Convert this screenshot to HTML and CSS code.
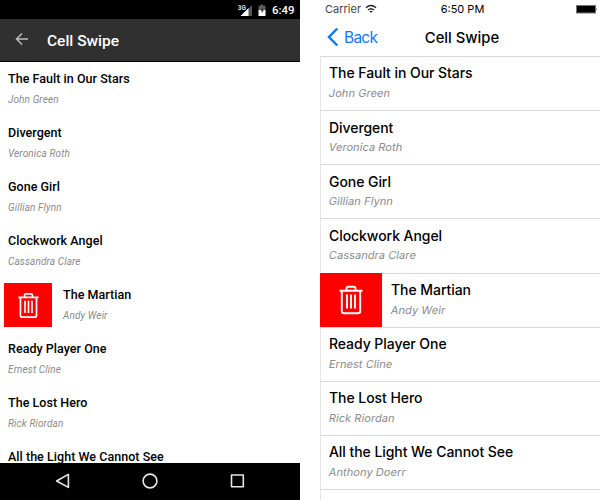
FILE: index.html
```
<!DOCTYPE html>
<html lang="en">
<head>
<meta charset="utf-8">
<title>Cell Swipe</title>
<link rel="stylesheet" href="styles.css">
</head>
<body>
<svg class="defs" width="0" height="0">
  <symbol id="trash" viewBox="0 0 24 30">
    <path d="M.5 5.8H23.5M7.5 5.5V3.4Q7.5 1.7 9.2 1.7H14.8Q16.5 1.7 16.5 3.4V5.5M2.8 6V26Q2.8 28.3 5 28.3H19Q21.2 28.3 21.2 26V6M8 9.5V23.5M12 9.5V23.5M16 9.5V23.5" fill="none" stroke="#fff" stroke-width="1.9"/>
  </symbol>
</svg>
<main class="screens">
  <section class="phone android">
    <div class="status">
      <svg class="status-icons" width="30" height="18" viewBox="0 0 30 18">
        <text x="-.3" y="8.6" class="net">3G</text>
        <path d="M14 4V15H10V8Z" fill="#555"/>
        <path d="M2.5 15L10.5 7V15Z" fill="#fff"/>
        <path d="M20.5 4.7H22.5V3.5H25V4.7H27.5V9H20.5Z" fill="#5d5d5d"/>
        <path d="M20.5 9H27.5V15H20.5Z" fill="#fff"/>
        <path d="M25 6.5L22.8 9.8H24L23.6 12.3L25.7 9.2H24.5Z" fill="#111"/>
      </svg>
      <span class="clock">6:49</span>
    </div>
    <header class="bar">
      <svg class="arrow" width="14" height="14" viewBox="0 0 14 14"><path d="M13 7H1.7M7 1.5L1.5 7L7 12.5" fill="none" stroke="#bdbdbd" stroke-width="1.5"/></svg>
      <h1>Cell Swipe</h1>
    </header>
    <ul class="list">
      <li><div class="book"><b>The Fault in Our Stars</b><i>John Green</i></div></li>
      <li><div class="book"><b>Divergent</b><i>Veronica Roth</i></div></li>
      <li><div class="book"><b>Gone Girl</b><i>Gillian Flynn</i></div></li>
      <li><div class="book"><b>Clockwork Angel</b><i>Cassandra Clare</i></div></li>
      <li><div class="delete"><svg width="21" height="27"><use href="#trash"/></svg></div><div class="book"><b>The Martian</b><i>Andy Weir</i></div></li>
      <li><div class="book"><b>Ready Player One</b><i>Ernest Cline</i></div></li>
      <li><div class="book"><b>The Lost Hero</b><i>Rick Riordan</i></div></li>
      <li><div class="book"><b>All the Light We Cannot See</b></div></li>
    </ul>
    <nav class="keys">
      <svg width="16" height="16" viewBox="0 0 16 16"><path d="M14.4 1.4V14.4L2.6 8Z"/></svg>
      <svg width="16" height="16" viewBox="0 0 16 16"><circle cx="8" cy="8" r="6.9"/></svg>
      <svg width="16" height="16" viewBox="0 0 16 16"><rect x="1.5" y="2" width="11.8" height="11.8"/></svg>
    </nav>
  </section>
  <section class="phone ios">
    <div class="status">
      <span class="carrier">Carrier
        <svg width="12" height="10" viewBox="0 0 12 10"><path d="M1 3.8Q6-.6 11 3.8M3 6Q6 3.4 9 6" fill="none" stroke="#222" stroke-width="1.4"/><path d="M4.4 7.3Q6 6.1 7.6 7.3L6 9Z" fill="#222"/></svg>
      </span>
      <span class="clock">6:50 PM</span>
      <svg class="battery" width="22" height="9" viewBox="0 0 22 9"><rect x=".5" y=".5" width="19" height="7.5" fill="#000" stroke="#777"/><path d="M20.5 3Q22 4.2 20.5 5.5Z" fill="#222"/></svg>
    </div>
    <header class="bar">
      <a class="back"><svg width="12" height="20" viewBox="0 0 12 20"><path d="M10.3 1.5L2 10L10.3 18.5" fill="none" stroke="#1478fb" stroke-width="2.5"/></svg><span>Back</span></a>
      <h1>Cell Swipe</h1>
    </header>
    <ul class="list">
      <li><div class="book"><b>The Fault in Our Stars</b><i>John Green</i></div></li>
      <li><div class="book"><b>Divergent</b><i>Veronica Roth</i></div></li>
      <li><div class="book"><b>Gone Girl</b><i>Gillian Flynn</i></div></li>
      <li><div class="book"><b>Clockwork Angel</b><i>Cassandra Clare</i></div></li>
      <li><div class="delete"><svg width="24" height="30"><use href="#trash"/></svg></div><div class="book"><b>The Martian</b><i>Andy Weir</i></div></li>
      <li><div class="book"><b>Ready Player One</b><i>Ernest Cline</i></div></li>
      <li><div class="book"><b>The Lost Hero</b><i>Rick Riordan</i></div></li>
      <li><div class="book"><b>All the Light We Cannot See</b><i>Anthony Doerr</i></div></li>
      <li></li>
    </ul>
  </section>
</main>
</body>
</html>
```
FILE: styles.css
```
* { box-sizing: border-box; }
body { margin: 0; background: #fff; color: #000; }
svg { display: block; flex: none; }
.defs { height: 0; }
h1 { margin: 0; }
ul { margin: 0; padding: 0; list-style: none; }
.screens { display: grid; grid-template-columns: 300px 280px; gap: 20px; height: 500px; overflow: hidden; }
.phone { display: flex; flex-direction: column; height: 500px; overflow: hidden; }
.status, .bar, .list li { display: flex; align-items: center; }
.book { display: flex; flex-direction: column; align-items: flex-start; white-space: nowrap; }
.book i { color: #8a8a8a; }
.delete { display: flex; align-items: center; justify-content: center; flex: none; background: #f00; }

.android { font-family: Roboto, sans-serif; }
.android .status { height: 19px; flex: none; background: #000; justify-content: flex-end; padding-right: 6px; gap: 4px; color: #fff; }
.net { font: bold 6.5px Roboto, sans-serif; fill: #ddd; }
.android .clock { font-size: 11.5px; line-height: 18px; font-weight: 500; width: 22px; white-space: nowrap; }
.android .bar { height: 43px; flex: none; background: #303030; border-bottom: 1px solid #000; padding: 1px 0 0 15px; gap: 18px; }
.android .arrow { margin-top: -3px; }
.android h1 { font-size: 15.5px; font-weight: 500; color: #fff; line-height: 20px; padding-top: 1px; }
.android .list { flex: 1; min-height: 0; overflow: hidden; }
.android li { height: 54px; padding-left: 8px; align-items: flex-start; }
.android .book { padding-top: 8px; }
.android b { font-size: 12.5px; font-weight: 500; line-height: 18px; letter-spacing: .04px; }
.android i { font-size: 10px; line-height: 14px; margin-top: 5px; letter-spacing: .12px; }
.android .delete { width: 48px; height: 44px; margin: 5px 11px 0 -4px; }
.keys { height: 37px; flex: none; background: #000; display: flex; justify-content: space-between; padding: 10px 54px 0; }
.keys svg { fill: none; stroke: #e6e6e6; stroke-width: 1.6; stroke-linejoin: round; }

.ios { font-family: Inter, sans-serif; }
.ios .status { height: 18px; flex: none; display: grid; grid-template-columns: 1fr auto 1fr; padding: 0 2px 0 7px; font-size: 11px; }
.carrier { display: flex; align-items: center; gap: 4px; color: #444; margin-left: -2px; }
.battery { justify-self: end; }
.ios .bar { height: 38px; flex: none; display: grid; grid-template-columns: 1fr auto 1fr; padding: 0 2px 0 7px; }
.back { display: flex; align-items: center; gap: 5px; color: #1478fb; font-size: 15.5px; letter-spacing: -.75px; }
.ios h1 { font-size: 14.8px; font-weight: 500; padding-top: 1px; margin-left: -1px; }
.ios .list { border-left: 1px solid #e4e4e4; }
.ios li { height: 54.15px; border-top: 1px solid #d9d9d9; padding-left: 8px; align-items: flex-start; }
.ios .book { padding-top: 6.4px; }
.ios b { font-size: 14px; font-weight: 500; line-height: 20px; letter-spacing: -.06px; }
.ios i { font-size: 11px; font-style: normal; line-height: 14px; margin-top: 2.6px; letter-spacing: .08px; transform: skewX(-10deg); }
.ios .delete { width: 62px; height: 54px; margin: -1px 9px 0 -9px; }
```
